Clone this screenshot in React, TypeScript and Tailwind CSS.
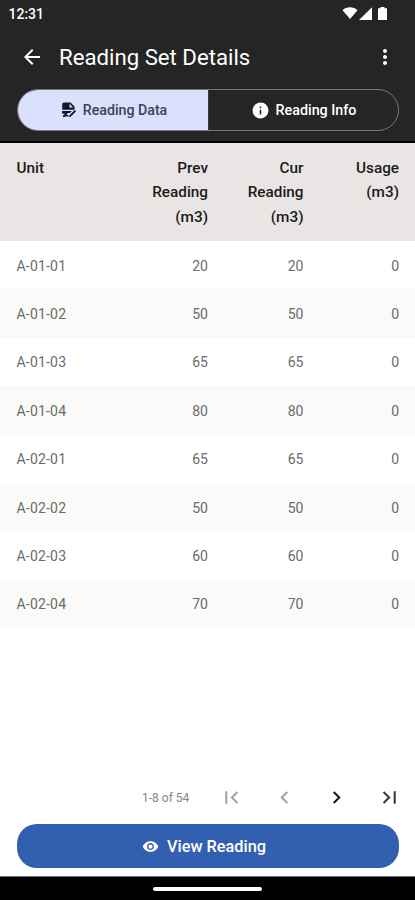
import React from "react";
import {
  MdArrowBack,
  MdMoreVert,
  MdInfo,
  MdRemoveRedEye,
  MdFirstPage,
  MdLastPage,
  MdChevronLeft,
  MdChevronRight,
} from "react-icons/md";

interface Reading {
  unit: string;
  prev: number;
  cur: number;
  usage: number;
}

const readings: Reading[] = [
  { unit: "A-01-01", prev: 20, cur: 20, usage: 0 },
  { unit: "A-01-02", prev: 50, cur: 50, usage: 0 },
  { unit: "A-01-03", prev: 65, cur: 65, usage: 0 },
  { unit: "A-01-04", prev: 80, cur: 80, usage: 0 },
  { unit: "A-02-01", prev: 65, cur: 65, usage: 0 },
  { unit: "A-02-02", prev: 50, cur: 50, usage: 0 },
  { unit: "A-02-03", prev: 60, cur: 60, usage: 0 },
  { unit: "A-02-04", prev: 70, cur: 70, usage: 0 },
];

const columns = "grid grid-cols-[96px_95.5px_95.5px_95.5px] pl-[16.5px]";

function FileSignIcon() {
  return (
    <svg viewBox="0 0 16 16" className="h-4 w-4 shrink-0" fill="none">
      <path
        fill="#10182f"
        d="M3 .5h6.500l4 4v3.300H1.200V2.300A1.800 1.800 0 0 1 3 .5Z"
      />
      <path fill="#dae1fd" d="M8.500 1.800v3.600h3.600z" />
      <path fill="#10182f" d="M1.200 9h9.600l-2 1.900H1.200z" />
      <path stroke="#10182f" strokeWidth="1.900" d="m8.500 14.600 5.900-5.900" />
      <path stroke="#10182f" strokeWidth="1.600" d="M1.300 11h4.500l-3.600 3.500 3.300-1.200 1.900 1.100" />
    </svg>
  );
}

function StatusBar() {
  return (
    <div className="flex h-[27px] items-center justify-between pl-[8.500px] pr-[27px] text-white">
      <span className="text-sm font-medium leading-none">12:31</span>
      <svg viewBox="0 0 46 14" className="h-3.5 w-[46px]" fill="white">
        <path d="M.5 3.200C4.800-.6 11.200-.6 15.500 3.200L8 12Z" />
        <path d="M30 .3v12.700H17Z" />
        <path d="M38.500 0h4v1.200H45v11.800h-9V1.200h2.500Z" />
      </svg>
    </div>
  );
}

export default function App() {
  return (
    <div className="flex h-[900px] w-[415px] flex-col overflow-hidden bg-white font-['Roboto',sans-serif]">
      <header className="h-[143px] shrink-0 border-b-2 border-black bg-[#252525]">
        <StatusBar />
        <div className="flex h-[60px] items-center pl-5 pr-[18px] text-white">
          <MdArrowBack className="h-6 w-6" />
          <h1 className="ml-[15px] flex-1 text-[22.200px] leading-none">Reading Set Details</h1>
          <MdMoreVert className="h-6 w-6" />
        </div>
        <div className="ml-[17px] mr-4 mt-0.5 flex h-[42px] overflow-hidden rounded-full border border-[#77777a] text-sm font-medium">
          <button className="flex w-[191px] items-center justify-center gap-1.5 border-r border-[#3a3a3c] bg-[#dae1fd] pl-0.5 text-[#3c4254]">
            <FileSignIcon />
            <span className="text-[14.200px]">Reading Data</span>
          </button>
          <button className="flex flex-1 items-center justify-center gap-1.5 text-white">
            <MdInfo className="h-[19px] w-[19px]" />
            <span className="text-[14.300px]">Reading Info</span>
          </button>
        </div>
      </header>

      <div className={`${columns} h-[98px] shrink-0 bg-[#e9e5e4] pt-[13px] text-[15.300px] font-medium leading-[24.300px] text-[#1b1b1b]`}>
        <div>Unit</div>
        <div className="text-right">Prev<br />Reading<br />(m3)</div>
        <div className="text-right">Cur<br />Reading<br />(m3)</div>
        <div className="text-right">Usage<br />(m3)</div>
      </div>
      <div className="shrink-0">
        {readings.map((row) => (
          <div
            key={row.unit}
            className={`${columns} h-[48.400px] items-center pt-px text-sm text-[#6b6b6b] odd:bg-white even:bg-[#fafaf8]`}
          >
            <div className="tracking-[0.2px]">{row.unit}</div>
            <div className="text-right">{row.prev}</div>
            <div className="text-right">{row.cur}</div>
            <div className="text-right">{row.usage}</div>
          </div>
        ))}
      </div>

      <div className="mt-auto flex h-[54px] items-center text-[#a3a3a3]">
        <span className="ml-[142px] w-[77px] pt-px text-xs text-[#858585]">1-8 of 54</span>
        <MdFirstPage className="h-[25px] w-[25px]" />
        <MdChevronLeft className="ml-7 h-[25px] w-[25px]" />
        <MdChevronRight className="ml-[27px] h-[25px] w-[25px] text-[#1b1b1b]" />
        <MdLastPage className="ml-7 h-[25px] w-[25px] text-[#3a3a3a]" />
      </div>
      <button className="ml-[17px] mr-4 mb-2 flex h-11 shrink-0 items-center justify-center gap-2 rounded-[20px] bg-[#335fb0] pr-2 pt-0.5 text-[16.300px] font-medium text-white">
        <MdRemoveRedEye className="-mt-0.5 h-[17px] w-[17px]" />
        View Reading
      </button>
      <footer className="flex h-6 shrink-0 items-center justify-center border-t border-[#6b6b6b] bg-black">
        <div className="h-1 w-[109px] rounded-full bg-white" />
      </footer>
    </div>
  );
}
